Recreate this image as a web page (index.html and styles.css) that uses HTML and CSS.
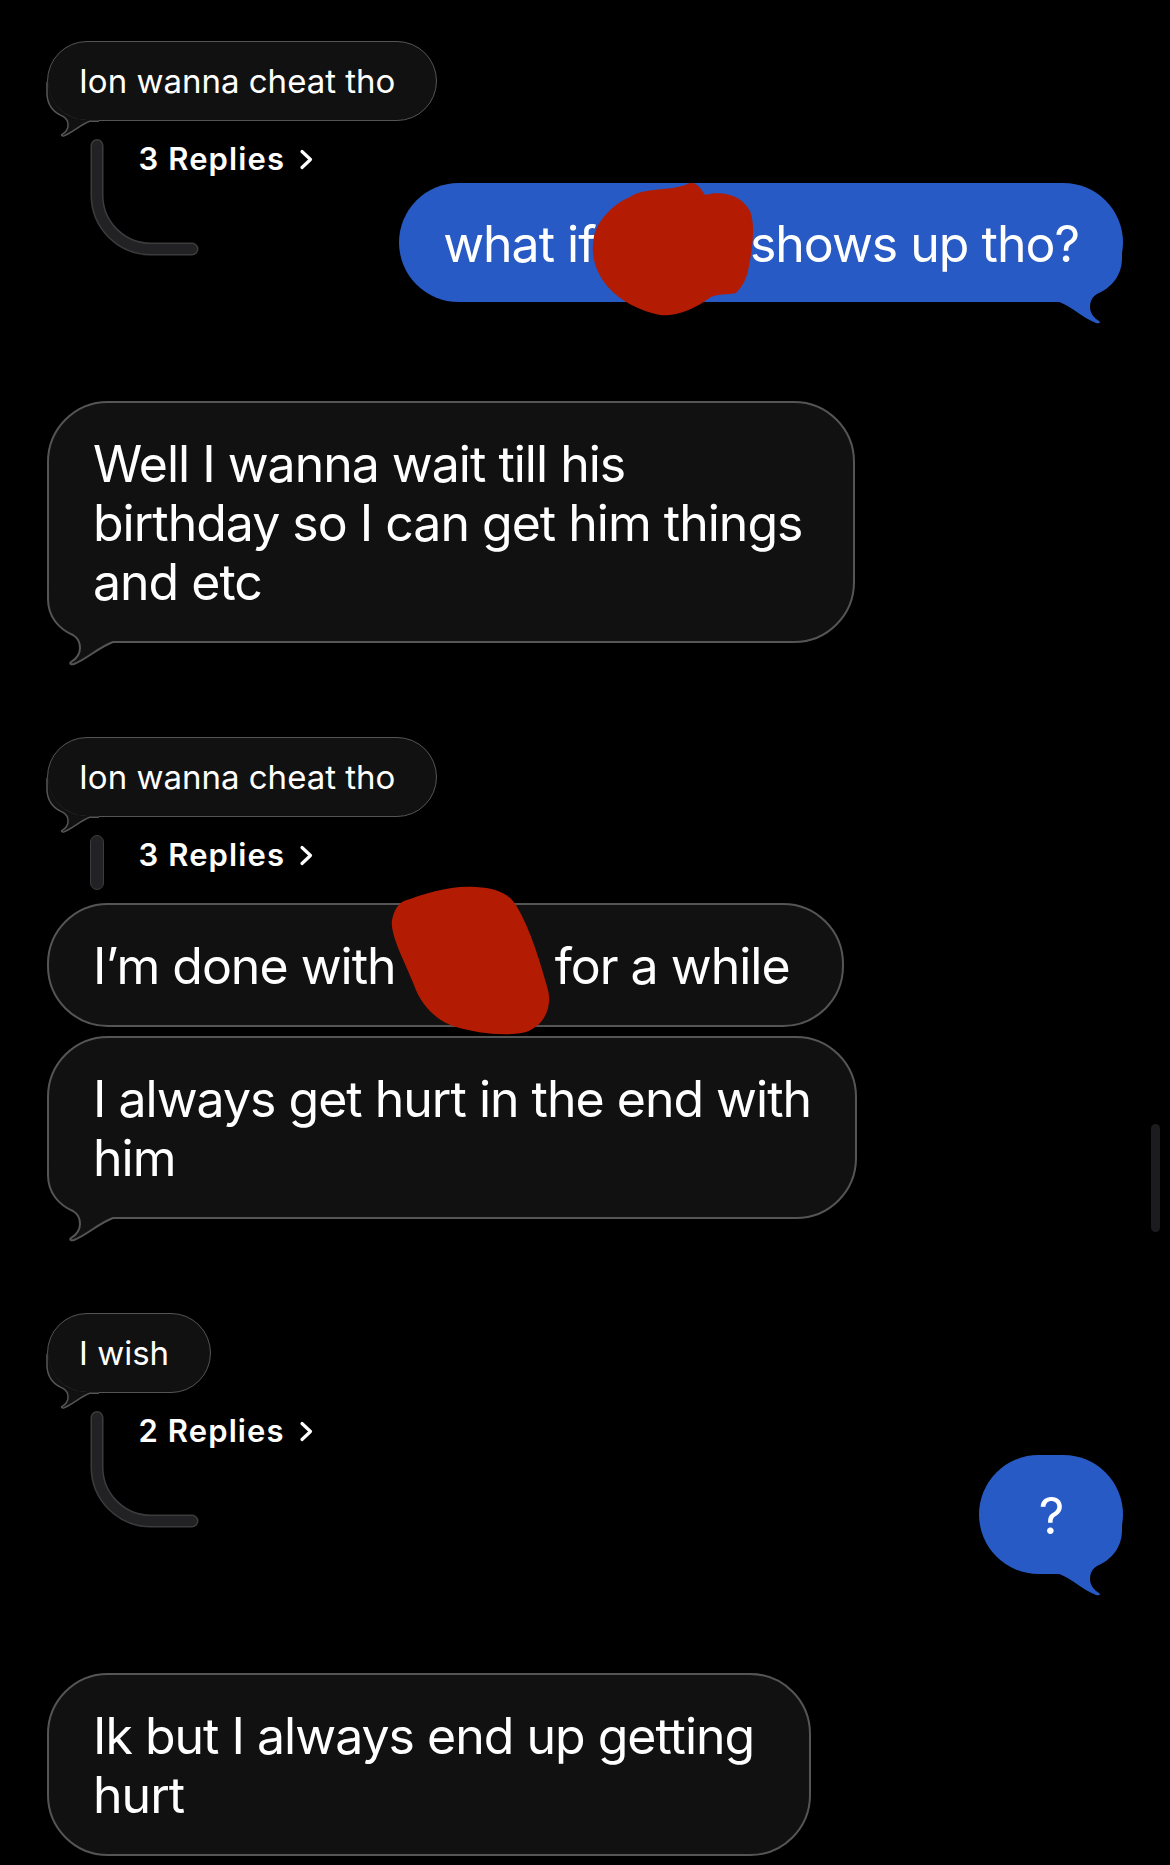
FILE: index.html
```html
<!DOCTYPE html>
<html lang="en">
<head>
  <meta charset="UTF-8" />
  <meta name="viewport" content="width=device-width, initial-scale=1.0"/>
  <title>Messages</title>
  <link rel="stylesheet" href="styles.css">
</head>
<body>
  <div class="chat">

    <div class="group">
      <div class="bubble in small">
        <svg class="tail" viewBox="-2 -62 82 84"><use href="#tail-area" class="tail-area"/><use href="#tail-edge" class="tail-edge"/></svg>
        Ion wanna cheat tho
      </div>
      <div class="thread-body">
        <svg class="link" viewBox="0 0 109 117"><path class="link-edge" d="M7 6.5 V56 A54 54 0 0 0 61 110 H102"/><path class="link-fill" d="M7 6.5 V56 A54 54 0 0 0 61 110 H102"/></svg>
        <div class="replies">3 Replies<svg class="chev" viewBox="0 0 14 21"><polyline points="3,2.5 11.5,10.5 3,18.5"/></svg></div>
        <div class="bubble out">
          <svg class="tail" viewBox="-2 -62 82 84"><use href="#tail-area" class="tail-area"/></svg>
          what if <svg class="scribble s1" viewBox="0 0 163 135"><path d="M40 16 C55 6 80 10 95 4 C105 -2 110 6 115 14 C130 10 150 12 160 30 C166 45 162 70 158 90 C156 100 150 108 146 112 C140 114 125 112 118 118 C105 128 85 136 70 134 C50 130 30 120 18 106 C6 92 0 75 4 55 C8 38 25 22 40 16 Z"/></svg> shows up tho?
        </div>
      </div>
    </div>

    <div class="group">
      <div class="bubble in">
        <svg class="tail" viewBox="-2 -62 82 84"><use href="#tail-area" class="tail-area"/><use href="#tail-edge" class="tail-edge"/></svg>
        Well I wanna wait till his<br>birthday so I can get him things<br>and etc
      </div>
    </div>

    <div class="group">
      <div class="bubble in small">
        <svg class="tail" viewBox="-2 -62 82 84"><use href="#tail-area" class="tail-area"/><use href="#tail-edge" class="tail-edge"/></svg>
        Ion wanna cheat tho
      </div>
      <div class="thread-body">
        <div class="bar"></div>
        <div class="replies">3 Replies<svg class="chev" viewBox="0 0 14 21"><polyline points="3,2.5 11.5,10.5 3,18.5"/></svg></div>
      </div>
      <div class="bubble in first">
        I’m done with <svg class="scribble s2" viewBox="0 0 165 150"><path d="M18 16 C40 8 65 0 90 2 C110 3 122 8 130 20 C145 45 155 80 162 105 C166 120 160 140 140 147 C120 152 90 148 70 142 C50 136 35 120 28 100 C18 75 4 50 6 35 C8 25 12 19 18 16 Z"/></svg> for a while
      </div>
      <div class="bubble in next">
        <svg class="tail" viewBox="-2 -62 82 84"><use href="#tail-area" class="tail-area"/><use href="#tail-edge" class="tail-edge"/></svg>
        I always get hurt in the end with<br>him
      </div>
    </div>

    <div class="group">
      <div class="bubble in small">
        <svg class="tail" viewBox="-2 -62 82 84"><use href="#tail-area" class="tail-area"/><use href="#tail-edge" class="tail-edge"/></svg>
        I wish
      </div>
      <div class="thread-body">
        <svg class="link" viewBox="0 0 109 117"><path class="link-edge" d="M7 6.5 V56 A54 54 0 0 0 61 110 H102"/><path class="link-fill" d="M7 6.5 V56 A54 54 0 0 0 61 110 H102"/></svg>
        <div class="replies">2 Replies<svg class="chev" viewBox="0 0 14 21"><polyline points="3,2.5 11.5,10.5 3,18.5"/></svg></div>
        <div class="bubble out short">
          <svg class="tail" viewBox="-2 -62 82 84"><use href="#tail-area" class="tail-area"/></svg>
          ?
        </div>
      </div>
    </div>

    <div class="group">
      <div class="bubble in last">
        Ik but I always end up getting<br>hurt
      </div>
    </div>

  </div>

  <div class="scroll-thumb"></div>

  <svg class="defs" width="0" height="0" aria-hidden="true">
    <defs>
      <path id="tail-edge" d="M1 -61 L1 -44 C1 -26 12 -14 26 -8 C31 -5 33 0 33 5 C33 11 29 16 24 19 C22 20.5 24 22 27 21 C40 16 52 4 66 -1 L80 -1"/>
      <path id="tail-area" d="M1 -61 L1 -44 C1 -26 12 -14 26 -8 C31 -5 33 0 33 5 C33 11 29 16 24 19 C22 20.5 24 22 27 21 C40 16 52 4 66 -1 L80 -1 L80 -3 L61 -3 A58 58 0 0 1 3 -61 Z"/>
    </defs>
  </svg>
</body>
</html>
```

FILE: styles.css
```css
html {
  background: #000;
}
body {
  margin: 0;
  height: 1865px;
  background: #000;
  color: #fff;
  font-family: Inter, "Noto Sans", sans-serif;
  overflow: hidden;
  position: relative;
}
.chat {
  display: flex;
  flex-direction: column;
  gap: 94px;
  padding: 41px 47px 0;
}
.group {
  display: flex;
  flex-direction: column;
  align-items: flex-start;
}

/* bubbles */
.bubble {
  position: relative;
  box-sizing: border-box;
  padding: 32px 51px 29px 44px;
  font-size: 50px;
  line-height: 59px;
  letter-spacing: -0.02em;
  white-space: nowrap;
  border-radius: 61px;
}
.bubble.in {
  background: #111;
  border: 2px solid #555;
}
.bubble.in.small {
  padding: 19px 41px 19px 31px;
  font-size: 33px;
  line-height: 40px;
  letter-spacing: 0;
  border-width: 1.5px;
  border-radius: 41px;
}
.bubble.out {
  background: #275ac4;
  padding: 32px 44px 28px;
  border-radius: 60px;
}
.bubble.out.short {
  min-width: 144px;
  padding-left: 0;
  padding-right: 0;
  text-align: center;
}
.bubble.first {
  margin-top: 13px;
  padding-right: 52px;
}
.bubble.next {
  margin-top: 9px;
  padding-right: 44px;
}
.bubble.last {
  padding-right: 55px;
}

/* tails */
.tail {
  position: absolute;
  left: -4px;
  bottom: -24px;
  width: 82px;
  height: 84px;
  overflow: visible;
}
.small .tail {
  left: -2.8px;
  bottom: -16px;
  width: 54px;
  height: 55.4px;
}
.tail-area {
  fill: #111;
}
.tail-edge {
  fill: none;
  stroke: #555;
  stroke-width: 2;
}
.small .tail-edge {
  stroke-width: 2.3;
}
.out .tail {
  left: auto;
  right: -2px;
  bottom: -22px;
  transform: scaleX(-1);
}
.out .tail-area {
  fill: #275ac4;
}

/* threads */
.thread-body {
  align-self: stretch;
  display: grid;
  grid-template-columns: 51px 1fr;
  margin: 18px 0 0 42.5px;
}
.link {
  grid-row: 1 / span 2;
  width: 109px;
  height: 117px;
  overflow: visible;
}
.link path {
  fill: none;
  stroke-linecap: round;
}
.link-edge {
  stroke: #3c3c3e;
  stroke-width: 13;
}
.link-fill {
  stroke: #222224;
  stroke-width: 10;
}
.bar {
  width: 14px;
  height: 55px;
  box-sizing: border-box;
  background: #222224;
  border: 1.5px solid #3c3c3e;
  border-radius: 7px;
}
.replies {
  grid-column: 2;
  height: 44px;
  margin-left: -2px;
  font-size: 31px;
  font-weight: 600;
  line-height: 40px;
  letter-spacing: 1.1px;
}
.chev {
  width: 14px;
  height: 21px;
  margin-left: 14px;
  fill: none;
  stroke: #fff;
  stroke-width: 3.2;
  stroke-linecap: round;
  stroke-linejoin: round;
}
.thread-body .bubble.out {
  grid-column: 2;
  justify-self: end;
  margin-bottom: 5px;
}

/* redaction scribbles */
.scribble {
  fill: #b31c02;
  overflow: visible;
}
.s1 {
  width: 163px;
  height: 135px;
  margin: -81px -16px -54px -19px;
}
.s2 {
  width: 165px;
  height: 150px;
  margin: -99px -9px -51px -23px;
}

.scroll-thumb {
  position: absolute;
  left: 1151px;
  top: 1124px;
  width: 9px;
  height: 108px;
  border-radius: 5px;
  background: #1c1c1e;
}
.defs {
  display: block;
}
```
